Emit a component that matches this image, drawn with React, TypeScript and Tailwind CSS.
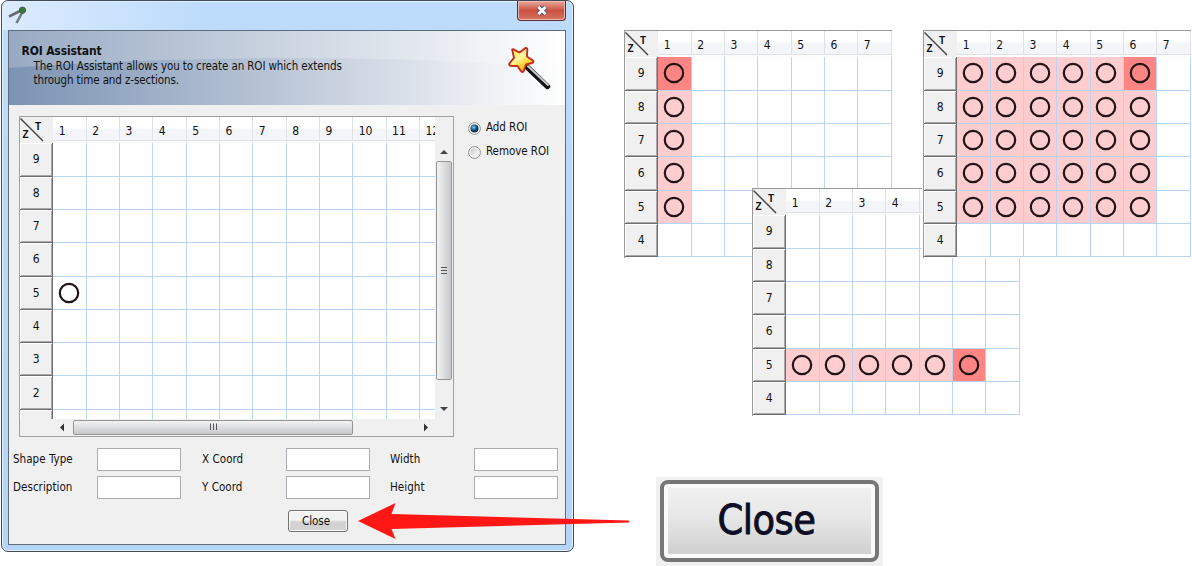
import React from "react";

type GridProps = {
  cols: number[];
  rows: number[];
  circles?: (row: number, col: number) => boolean;
  selected?: (row: number, col: number) => boolean;
  active?: (row: number, col: number) => boolean;
  className?: string;
};

const no = () => false;

function AxisCorner() {
  return (
    <div className="h-[26.2px] w-[33.33px] shrink-0 bg-[#f0f0f0]">
      <svg width="33" height="26" viewBox="0 0 33 26" className="block">
        <path d="M0.5 1.5 L23 24" stroke="#444" strokeWidth="1.4" />
        <text x="15" y="12.5" fontSize="10" fontWeight="700" fontFamily="Liberation Sans, sans-serif" fill="#111">T</text>
        <text x="2.5" y="21" fontSize="10" fontWeight="700" fontFamily="Liberation Sans, sans-serif" fill="#111">Z</text>
      </svg>
    </div>
  );
}

function RoiGrid({ cols, rows, circles = no, selected = no, active = no, className = "" }: GridProps) {
  return (
    <div className={`overflow-hidden bg-white ${className}`}>
      <div className="flex">
        <AxisCorner />
        {cols.map((c) => (
          <div key={c} className="flex h-[26.2px] w-[33.33px] shrink-0 flex-col bg-[#fcfcfc] pb-[2px]">
            <div className="flex flex-1 items-center border-r border-b border-[#e0e1e4] bg-linear-to-b from-white from-45% to-[#f4f5f8] to-55% pt-[5px] pl-[5.5px] text-[12px] leading-none">
              {c}
            </div>
          </div>
        ))}
      </div>
      {rows.map((r) => (
        <div key={r} className="flex h-[33.33px]">
          <div className="flex w-[33.33px] shrink-0 items-center justify-center border-r border-b border-[#6f6f6f] bg-[#f0f0f0] text-[12px] leading-none shadow-[inset_1px_1px_0_#fff,inset_-1px_-1px_0_#a8a8a8]">
            {r > 0 ? r : ""}
          </div>
          {cols.map((c) => (
            <div
              key={c}
              className={`flex w-[33.33px] shrink-0 items-center justify-center border-r border-b border-[#b8d5f6] ${
                active(r, c) ? "bg-[#ff8585]" : selected(r, c) ? "bg-[#ffcccf]" : "bg-white"
              }`}
            >
              {circles(r, c) && (
                <svg width="22" height="22" viewBox="0 0 22 22" className="mr-[1px] block">
                  <circle cx="11" cy="11" r="9.2" fill="none" stroke="#1f1516" strokeWidth="2.2" />
                </svg>
              )}
            </div>
          ))}
        </div>
      ))}
    </div>
  );
}

function Radio({ label, checked = false }: { label: string; checked?: boolean }) {
  return (
    <div className="flex h-6 items-center gap-[5px]">
      <svg width="13" height="13" viewBox="0 0 13 13">
        <defs>
          <radialGradient id="dot" cx="40%" cy="35%">
            <stop offset="0" stopColor="#8fdcf6" />
            <stop offset="0.5" stopColor="#2474a4" />
            <stop offset="1" stopColor="#0d324f" />
          </radialGradient>
          <linearGradient id="well" x2="1" y2="1">
            <stop offset="0" stopColor="#c4c8cc" />
            <stop offset="1" stopColor="#fff" />
          </linearGradient>
        </defs>
        <circle cx="6.5" cy="6.5" r="5.9" fill="#f6f6f6" stroke="#8e8f8f" />
        <circle cx="6.5" cy="6.5" r="4.2" fill="url(#well)" />
        {checked && <circle cx="6.5" cy="6.5" r="4" fill="url(#dot)" />}
      </svg>
      <span>{label}</span>
    </div>
  );
}

function Field({ label }: { label: string }) {
  return (
    <div className="flex items-center">
      <span className="w-[84px] shrink-0 pt-[1px]">{label}</span>
      <div className="h-[23px] w-[84px] border border-[#abadb3] bg-white" />
    </div>
  );
}

function Wand() {
  return (
    <svg width="44" height="44" viewBox="0 0 44 44">
      <defs>
        <linearGradient id="star" x1="0.2" y1="0" x2="0.8" y2="1">
          <stop offset="0" stopColor="#fff04a" />
          <stop offset="0.4" stopColor="#fff6a0" />
          <stop offset="0.65" stopColor="#ffd738" />
          <stop offset="1" stopColor="#f59a1c" />
        </linearGradient>
      </defs>
      <path d="M19 20 L39.5 39.5" stroke="#111" strokeWidth="5.4" strokeLinecap="round" />
      <path d="M20 19.2 L40 38" stroke="#c9cccc" strokeWidth="2" strokeLinecap="round" />
      <path d="M4.2 2.6 Q5.2 1.8 6.5 2.8 L11.5 5.5 L17.5 1 Q19.5 0.6 19.3 3 L19 9.5 L25 13.5 Q26.3 15.2 24 16 L18 17.5 L15.6 24.2 Q14.2 26 12.9 24 L9.5 19 L2.2 18.8 Q0.4 17.6 1.8 16 L6 10.8 Z" fill="url(#star)" stroke="#c22a22" strokeWidth="1.9" strokeLinejoin="round" />
    </svg>
  );
}

function Banner() {
  return (
    <div className="relative h-[74px] bg-linear-to-r from-[#98aac3] via-[#ccd5e1] via-50% to-white">
      <svg className="absolute inset-0" width="556" height="74" viewBox="0 0 556 74">
        <defs>
          <linearGradient id="wave">
            <stop offset="0" stopColor="#7b93b4" />
            <stop offset="0.5" stopColor="#bdc8d8" />
            <stop offset="0.8" stopColor="#e6eaf0" />
            <stop offset="1" stopColor="#fff" />
          </linearGradient>
        </defs>
        <path d="M0 37 C80 31 180 27 290 27 C390 27 480 31 556 37 V74 H0 Z" fill="url(#wave)" />
      </svg>
      <div className="relative flex justify-between pt-[13px] pl-[12.5px]">
        <div>
          <div className="text-[12px] leading-[15px] font-bold tracking-[-0.15px]">ROI Assistant</div>
          <div className="pl-[12px] leading-[14.4px] tracking-[-0.11px]">
            <div>The ROI Assistant allows you to create an ROI which extends</div>
            <div>through time and z-sections.</div>
          </div>
        </div>
        <div className="mr-[13px] mt-[3px]">
          <Wand />
        </div>
      </div>
    </div>
  );
}

function Dialog() {
  return (
    <div className="absolute top-0 left-[1px] flex h-[552px] w-[573px] flex-col rounded-[7px] border-[1.5px] border-[#414b59] bg-linear-to-b from-[#bddcfb] to-[#b5d5f7] pr-[7px] pb-[6px] pl-[6px] shadow-[inset_0_0_0_1px_#e4f1ff]">
      <div className="-mr-px -ml-[5px] flex h-[29px] shrink-0 items-start justify-between rounded-tl-[6px] bg-linear-to-r from-[#dcebff] to-transparent to-35% pl-[5px]">
        <svg width="20" height="20" viewBox="0 0 20 20" className="mt-[4px]">
          <path d="M1 11.5 L14 5" stroke="#666b70" strokeWidth="2.6" />
          <path d="M8.5 18 L15 6" stroke="#777b80" strokeWidth="2.6" />
          <circle cx="14.5" cy="5.2" r="3.1" fill="#347a35" stroke="#4b594c" />
        </svg>
        <div className="mr-px flex h-[20px] w-[49px] items-center justify-center rounded-b-[4px] border border-t-0 border-[#5d2930] bg-linear-to-b from-[#e6aaa0] via-[#c9503f] via-50% to-[#d8765f] shadow-[inset_0_0_0_1px_#f0b9ae]">
          <svg width="14" height="11" viewBox="0 0 14 11">
            <path d="M3.5 2 L10.5 9 M10.5 2 L3.5 9" stroke="#555a70" strokeWidth="5" />
            <path d="M3.5 2 L10.5 9 M10.5 2 L3.5 9" stroke="#fff" strokeWidth="2.8" />
          </svg>
        </div>
      </div>
      <div className="flex flex-1 flex-col border border-[#5f6b7a] bg-[#f0f0f0]">
        <Banner />
        <div className="flex pt-[11px] pl-[10px]">
          <div className="flex h-[321px] w-[435px] flex-col border border-[#a0a0a0] bg-[#f0f0f0]">
            <div className="flex h-[302px]">
              <RoiGrid
                cols={[1, 2, 3, 4, 5, 6, 7, 8, 9, 10, 11, 12]}
                rows={[9, 8, 7, 6, 5, 4, 3, 2, 0]}
                circles={(r, c) => r === 5 && c === 1}
                className="h-[302px] w-[415px]"
              />
              <div className="flex w-[18px] flex-col items-center pt-[25px]">
                <svg width="8" height="19" viewBox="0 0 8 19"><path d="M0 12 L4 8 L8 12Z" fill="#444" /></svg>
                <div className="flex h-[219px] w-[16px] shrink-0 items-center justify-center rounded-[2px] border border-[#969696] bg-linear-to-r from-[#f3f3f3] to-[#c7c8cb]">
                  <svg width="8" height="9" viewBox="0 0 8 9"><path d="M1 1.5H7M1 4.5H7M1 7.5H7" stroke="#555" /></svg>
                </div>
                <svg width="8" height="38" viewBox="0 0 8 38"><path d="M0 27 L4 31 L8 27Z" fill="#444" /></svg>
              </div>
            </div>
            <div className="flex h-[16px] items-center pl-[39px]">
              <svg width="14" height="9" viewBox="0 0 14 9"><path d="M5 0.5 L1 4.5 L5 8.5Z" fill="#333" /></svg>
              <div className="flex h-[15px] w-[280px] items-center justify-center rounded-[2px] border border-[#969696] bg-linear-to-b from-[#f3f3f3] to-[#c7c8cb]">
                <svg width="9" height="8" viewBox="0 0 9 8"><path d="M1.5 0.5V7M4.5 0.5V7M7.5 0.5V7" stroke="#555" /></svg>
              </div>
              <svg width="80" height="9" viewBox="0 0 80 9"><path d="M71 0.5 L75 4.5 L71 8.5Z" fill="#333" /></svg>
            </div>
          </div>
          <div className="pl-[14px]">
            <Radio label="Add ROI" checked />
            <Radio label="Remove ROI" />
          </div>
        </div>
        <div className="grid grid-cols-[189px_188px_168px] gap-y-[5px] pt-[11px] pl-[4px] tracking-[0.05px]">
          <Field label="Shape Type" />
          <Field label="X Coord" />
          <Field label="Width" />
          <Field label="Description" />
          <Field label="Y Coord" />
          <Field label="Height" />
        </div>
        <div className="flex pt-[11px] pl-[279px]">
          <button className="h-[22px] w-[60px] rounded-[3px] border border-[#707070] bg-linear-to-b from-[#f2f2f2] from-45% to-[#d2d2d2] to-55% pt-[2px] pr-[4px] leading-none shadow-[inset_0_0_0_1px_#fafafa]">
            Close
          </button>
        </div>
      </div>
    </div>
  );
}

export default function App() {
  return (
    <main className="relative h-[566px] w-[1192px] overflow-hidden bg-white font-['DejaVu_Sans_Condensed','DejaVu_Sans',sans-serif] text-[11.5px] tracking-[-0.05px] text-[#111]">
      <Dialog />

      <div className="absolute top-[30px] left-[624px]">
        <RoiGrid
          cols={[1, 2, 3, 4, 5, 6, 7]}
          rows={[9, 8, 7, 6, 5, 4]}
          circles={(r, c) => r >= 5 && c === 1}
          selected={(r, c) => r >= 5 && c === 1}
          active={(r, c) => r === 9 && c === 1}
          className="h-[228px] w-[268px] border-t border-l border-[#999]"
        />
      </div>
      <div className="absolute top-[188px] left-[752px]">
        <RoiGrid
          cols={[1, 2, 3, 4, 5, 6, 7]}
          rows={[9, 8, 7, 6, 5, 4]}
          circles={(r, c) => r === 5 && c <= 6}
          selected={(r, c) => r === 5 && c <= 6}
          active={(r, c) => r === 5 && c === 6}
          className="h-[228px] w-[268px] border-t border-l border-[#999]"
        />
      </div>
      <div className="absolute top-[30px] left-[922px] border-l border-white">
        <RoiGrid
          cols={[1, 2, 3, 4, 5, 6, 7]}
          rows={[9, 8, 7, 6, 5, 4]}
          circles={(r, c) => r >= 5 && c <= 6}
          selected={(r, c) => r >= 5 && c <= 6}
          active={(r, c) => r === 9 && c === 6}
          className="h-[228px] w-[268px] border-t border-l border-[#999]"
        />
      </div>

      <svg className="absolute top-[500px] left-[355px]" width="276" height="42" viewBox="0 0 276 42">
        <path d="M3 21 L40.5 3 L36.5 14 L274 20.5 V22.5 L36.5 29 L40.5 39 Z" fill="#fe1714" />
      </svg>

      <div className="absolute top-[477px] left-[656px] flex h-[89px] w-[227px] bg-[#f0f0f0] pt-[3px] pl-[4px]">
        <div className="flex h-[82px] w-[219px] items-center justify-center rounded-[8px] border-4 border-[#767676] bg-linear-to-b from-[#f2f2f2] from-0% via-[#e6e6e6] via-48% to-[#cdcdcd] pr-[6px] pb-[2px] text-[41px] leading-none tracking-[-0.5px] text-[#0c0c24] shadow-[inset_0_0_0_4px_#fafafa] [-webkit-text-stroke:0.8px_#0c0c24]">
          Close
        </div>
      </div>
    </main>
  );
}
